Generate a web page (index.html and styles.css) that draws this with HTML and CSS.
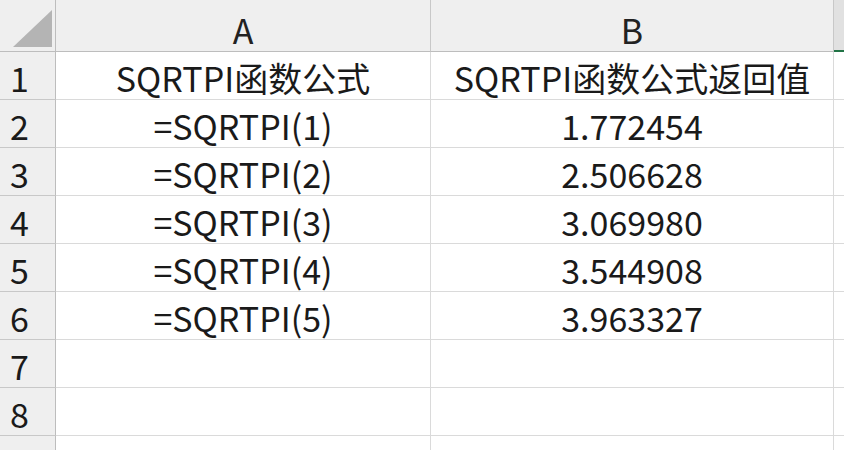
FILE: index.html
```html
<html>
<head>
  <title>SQRTPI</title>
  <link rel="stylesheet" href="styles.css">
</head>
<body>
<div class="sheet">
  <div class="corner"><div class="tri"></div></div>
  <div class="colhead">A</div>
  <div class="colhead">B</div>
  <div class="colhead sel"></div>

  <div class="rowhead">1</div><div class="cell">SQRTPI函数公式</div><div class="cell">SQRTPI函数公式返回值</div><div class="cell edge"></div>
  <div class="rowhead">2</div><div class="cell">=SQRTPI(1)</div><div class="cell">1.772454</div><div class="cell edge"></div>
  <div class="rowhead">3</div><div class="cell">=SQRTPI(2)</div><div class="cell">2.506628</div><div class="cell edge"></div>
  <div class="rowhead">4</div><div class="cell">=SQRTPI(3)</div><div class="cell">3.069980</div><div class="cell edge"></div>
  <div class="rowhead">5</div><div class="cell">=SQRTPI(4)</div><div class="cell">3.544908</div><div class="cell edge"></div>
  <div class="rowhead">6</div><div class="cell">=SQRTPI(5)</div><div class="cell">3.963327</div><div class="cell edge"></div>
  <div class="rowhead">7</div><div class="cell"></div><div class="cell"></div><div class="cell edge"></div>
  <div class="rowhead">8</div><div class="cell"></div><div class="cell"></div><div class="cell edge"></div>
  <div class="rowhead last"></div><div class="cell last"></div><div class="cell last"></div><div class="cell edge last"></div>
</div>
</body>
</html>
```

FILE: styles.css
```css
body {
  margin: 0;
  background: #fff;
  overflow: hidden;
}
.sheet {
  display: grid;
  grid-template-columns: 56px 375px 403px 10px;
  grid-template-rows: 52px repeat(8, 48px) 14px;
  font-family: "Noto Sans CJK SC", "Noto Sans", sans-serif;
  font-size: 34px;
  color: #1a1a1a;
}
.corner {
  background: #efefef;
  border-right: 1px solid #bdbdbd;
  border-bottom: 1px solid #bdbdbd;
  box-sizing: border-box;
  position: relative;
}
.tri {
  position: absolute;
  left: 13px;
  top: 10px;
  width: 39px;
  height: 37px;
  background: #b4b4b4;
  clip-path: polygon(100% 0, 100% 100%, 0 100%);
}
.colhead {
  background: #efefef;
  border-bottom: 1px solid #bdbdbd;
  border-right: 1px solid #c8c8c8;
  box-sizing: border-box;
  display: flex;
  align-items: center;
  justify-content: center;
  color: #222;
  padding-top: 8px;
}
.colhead.sel {
  background: #e1e1e1;
  border-bottom: 2px solid #217346;
  border-right: none;
}
.rowhead {
  background: #efefef;
  border-right: 1px solid #bdbdbd;
  border-bottom: 1px solid #c8c8c8;
  box-sizing: border-box;
  display: flex;
  align-items: center;
  padding-left: 10px;
  padding-top: 3px;
}
.cell {
  border-right: 1px solid #dadada;
  border-bottom: 1px solid #dadada;
  box-sizing: border-box;
  display: flex;
  align-items: center;
  justify-content: center;
  white-space: nowrap;
  padding-top: 3px;
}
.cell.edge {
  border-right: none;
}
.last {
  border-bottom: none;
  padding-top: 0;
}
```
